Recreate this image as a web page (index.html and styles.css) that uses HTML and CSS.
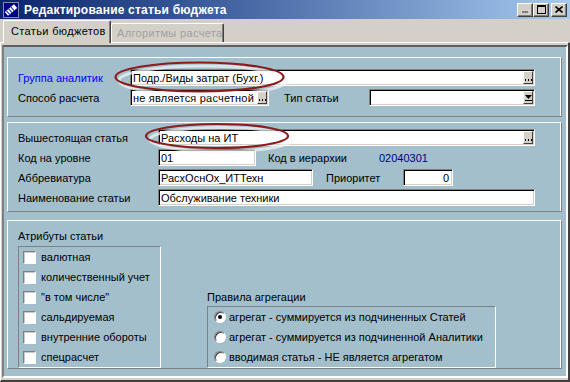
FILE: index.html
```html
<!DOCTYPE html>
<html lang="ru">

<head>
  <meta charset="UTF-8" />
  <title>Редактирование статьи бюджета</title>
  <link rel="stylesheet" href="styles.css">
</head>

<body>
  <div class="window">
    <div class="titlebar">
      <svg class="app-icon" width="16" height="16" viewBox="0 0 16 16">
        <rect x="0.5" y="0.5" width="15" height="15" fill="#000080" stroke="#ffffff" stroke-dasharray="1 1" />
        <g transform="rotate(-40 8 8)">
          <rect x="2" y="5.5" width="12" height="5" fill="#ffffff" />
          <line x1="4" y1="5.5" x2="4" y2="10.5" stroke="#1f3fbf" stroke-width="1.2" />
          <line x1="7" y1="5.5" x2="7" y2="10.5" stroke="#1f3fbf" stroke-width="1.2" />
          <line x1="10" y1="5.5" x2="10" y2="10.5" stroke="#1f3fbf" stroke-width="1.2" />
        </g>
      </svg>
      <span class="title">Редактирование статьи бюджета</span>
      <div class="caption-btns">
        <span class="cbtn">
          <svg width="8" height="7" viewBox="0 0 8 7"><rect x="1" y="5" width="6" height="2" fill="#808080" /></svg>
        </span>
        <span class="cbtn">
          <svg width="9" height="9" viewBox="0 0 9 9"><rect x="0.5" y="0.5" width="8" height="8" fill="none" stroke="#000" /><rect x="0" y="0" width="9" height="2" fill="#000" /></svg>
        </span>
        <span class="cbtn close">
          <svg width="8" height="7" viewBox="0 0 8 7"><path d="M0.5 0.5 L7.5 6.5 M7.5 0.5 L0.5 6.5" stroke="#000" stroke-width="1.6" /></svg>
        </span>
      </div>
    </div>

    <div class="tabs">
      <div class="tab active">Статьи бюджетов</div>
      <div class="tab disabled">Алгоритмы расчета</div>
    </div>

    <div class="page">
      <div class="client">
        <div class="panel p-top">
          <div class="row">
            <span class="lbl lbl-a link">Группа аналитик</span>
            <div class="edit e-analytic"><span class="val">Подр./Виды затрат (Бухг.)</span><span class="ebtn"><svg width="7" height="2" viewBox="0 0 7 2"><rect x="0" y="0" width="1" height="2" /><rect x="3" y="0" width="1" height="2" /><rect x="6" y="0" width="1" height="2" /></svg></span></div>
          </div>
          <div class="row">
            <span class="lbl lbl-a">Способ расчета</span>
            <div class="edit e-method"><span class="val spaced">не является расчетной</span><span class="ebtn"><svg width="7" height="2" viewBox="0 0 7 2"><rect x="0" y="0" width="1" height="2" /><rect x="3" y="0" width="1" height="2" /><rect x="6" y="0" width="1" height="2" /></svg></span></div>
            <span class="lbl lbl-type">Тип статьи</span>
            <div class="edit e-type"><span class="val"></span>
              <span class="ebtn drop">
                <svg width="7" height="8" viewBox="0 0 7 8"><path d="M0 1 H7 L3.5 5 Z" fill="#000" /><rect x="0" y="6" width="7" height="1" fill="#000" /></svg>
              </span>
            </div>
          </div>
        </div>

        <div class="panel p-mid">
          <div class="row">
            <span class="lbl lbl-b">Вышестоящая статья</span>
            <div class="edit e-parent"><span class="val">Расходы на ИТ</span><span class="ebtn"><svg width="7" height="2" viewBox="0 0 7 2"><rect x="0" y="0" width="1" height="2" /><rect x="3" y="0" width="1" height="2" /><rect x="6" y="0" width="1" height="2" /></svg></span></div>
          </div>
          <div class="row">
            <span class="lbl lbl-b">Код на уровне</span>
            <div class="edit e-code"><span class="val">01</span></div>
            <span class="lbl lbl-hier">Код в иерархии</span>
            <span class="code-val">02040301</span>
          </div>
          <div class="row">
            <span class="lbl lbl-b">Аббревиатура</span>
            <div class="edit e-abbr"><span class="val">РасхОснОх_ИТТехн</span></div>
            <span class="lbl lbl-prio">Приоритет</span>
            <div class="edit e-prio"><span class="val num">0</span></div>
          </div>
          <div class="row">
            <span class="lbl lbl-b">Наименование статьи</span>
            <div class="edit e-parent"><span class="val">Обслуживание техники</span></div>
          </div>
        </div>

        <div class="panel p-bottom">
          <div class="col col-attr">
            <div class="cap">Атрибуты статьи</div>
            <div class="group">
              <div class="opt"><span class="check"></span>валютная</div>
              <div class="opt"><span class="check"></span>количественный учет</div>
              <div class="opt"><span class="check"></span>"в том числе"</div>
              <div class="opt"><span class="check"></span>сальдируемая</div>
              <div class="opt"><span class="check"></span>внутренние обороты</div>
              <div class="opt"><span class="check"></span>спецрасчет</div>
            </div>
          </div>
          <div class="col col-rules">
            <div class="cap">Правила агрегации</div>
            <div class="group radios">
              <div class="opt"><span class="radio on"></span>агрегат - суммируется из подчиненных Статей</div>
              <div class="opt"><span class="radio"></span>агрегат - суммируется из подчиненной Аналитики</div>
              <div class="opt"><span class="radio"></span>вводимая статья - НЕ является агрегатом</div>
            </div>
          </div>
        </div>
      </div>
    </div>

    <!-- red marks drawn over the form -->
    <svg class="marks" width="570" height="382" viewBox="0 0 570 382">
      <ellipse cx="201" cy="78.5" rx="84" ry="14.5" fill="none" stroke="#f4f6f6" stroke-opacity=".7" stroke-width="3" transform="translate(2 2)" />
      <ellipse cx="199.5" cy="77" rx="84" ry="14.5" fill="none" stroke="#8c1c1c" stroke-width="2.2" />
      <ellipse cx="219" cy="137.5" rx="71" ry="12" fill="none" stroke="#f4f6f6" stroke-opacity=".7" stroke-width="3" transform="translate(2 2)" />
      <ellipse cx="217" cy="136" rx="71" ry="12" fill="none" stroke="#8c1c1c" stroke-width="2.2" />
    </svg>
  </div>
</body>

</html>
```

FILE: styles.css
```css
* {
  box-sizing: border-box;
  margin: 0;
  padding: 0;
}

body {
  font-family: "Liberation Sans", Arial, sans-serif;
  font-size: 11px;
  color: #000;
  background: #d4d0c8;
}

.window {
  position: relative;
  width: 570px;
  height: 382px;
  overflow: hidden;
  background: #d4d0c8;
}

/* title bar */
.titlebar {
  height: 19px;
  display: flex;
  align-items: center;
  padding: 0 3px 0 3px;
  background: linear-gradient(to right, #0a246a 0%, #3a5a9a 35%, #a6caf0 100%);
}

.app-icon {
  flex: none;
}

.title {
  margin-left: 5px;
  color: #fff;
  font-weight: bold;
  font-size: 12px;
  letter-spacing: .2px;
}

.caption-btns {
  margin-left: auto;
  display: flex;
}

.cbtn {
  width: 16px;
  height: 14px;
  display: flex;
  align-items: center;
  justify-content: center;
  background: #d4d0c8;
  border-top: 1px solid #fff;
  border-left: 1px solid #fff;
  border-right: 1px solid #404040;
  border-bottom: 1px solid #404040;
  box-shadow: inset -1px -1px 0 #808080;
}

.cbtn.close {
  margin-left: 2px;
}

/* tabs */
.tabs {
  height: 23px;
  display: flex;
  align-items: flex-end;
  padding-left: 3px;
  position: relative;
  z-index: 1;
}

.tab {
  padding-left: 7px;
  white-space: nowrap;
  font-size: 11px;
  letter-spacing: .35px;
  border-top: 1px solid #fff;
  border-left: 1px solid #fff;
  border-right: 1px solid #404040;
  box-shadow: inset -1px 0 0 #808080;
  border-radius: 2px 2px 0 0;
  background: #d4d0c8;
}

.tab.active {
  height: 23px;
  line-height: 21px;
  width: 108px;
  margin-bottom: -1px;
}

.tab.disabled {
  height: 19px;
  line-height: 18px;
  padding-left: 5px;
  color: #a0a0a0;
  width: 113px;
}

.page {
  height: 340px;
  border-top: 1px solid #fff;
  border-left: 1px solid #fff;
  border-right: 2px solid #404040;
  border-bottom: 2px solid #404040;
  padding: 2px 0 2px 1px;
}

.client {
  height: 100%;
  background: #a3bfcb;
  border-top: 2px solid #606060;
  border-left: 2px solid #808080;
  border-right: 2px solid #fff;
  border-bottom: 2px solid #fff;
  padding: 10px 4px 0 3px;
}

/* panels */
.panel {
  border-top: 1px solid #fff;
  border-left: 1px solid #fff;
  border-right: 1px solid #808080;
  border-bottom: 1px solid #808080;
  box-shadow: inset -1px 0 0 #fff;
  padding-left: 10px;
}

.p-top {
  padding-top: 11px;
  padding-bottom: 10px;
}

.p-mid {
  margin-top: 5px;
  padding-top: 6px;
  padding-bottom: 5px;
}

.p-bottom {
  margin-top: 8px;
  padding-top: 8px;
  display: flex;
  align-items: flex-end;
}

.row {
  display: flex;
  align-items: center;
  height: 17px;
}

.row + .row {
  margin-top: 3px;
}

.lbl {
  flex: none;
  white-space: nowrap;
}

.lbl-a {
  width: 112px;
}

.lbl-b {
  width: 140px;
}

.link {
  color: #0000ff;
}

.lbl-type {
  width: 85px;
  margin-left: 15px;
}

.lbl-hier {
  width: 111px;
  margin-left: 12px;
}

.lbl-prio {
  width: 77px;
  margin-left: 13px;
}

.code-val {
  color: #000080;
}

/* edits */
.edit {
  flex: none;
  height: 17px;
  display: flex;
  align-items: center;
  background: #fff;
  border-top: 1px solid #808080;
  border-left: 1px solid #808080;
  border-right: 1px solid #fff;
  border-bottom: 1px solid #fff;
  box-shadow: inset 1px 1px 0 #000, inset -1px -1px 0 #d4d0c8;
  padding: 0 1px 0 2px;
}

.val {
  flex: 1;
  white-space: nowrap;
  overflow: hidden;
}

.val.spaced {
  letter-spacing: .2px;
}

.val.num {
  text-align: right;
  padding-right: 2px;
}

.ebtn {
  flex: none;
  width: 10px;
  height: 13px;
  display: flex;
  align-items: flex-end;
  justify-content: center;
  padding-bottom: 2px;
  background: #d4d0c8;
  border-top: 1px solid #fff;
  border-left: 1px solid #fff;
  border-right: 1px solid #404040;
  border-bottom: 1px solid #404040;
}

.ebtn.drop {
  align-items: center;
  padding: 0;
}

.e-analytic {
  width: 405px;
}

.e-method {
  width: 139px;
}

.e-type {
  width: 166px;
}

.e-parent {
  width: 377px;
}

.e-code {
  width: 98px;
}

.e-abbr {
  width: 155px;
}

.e-prio {
  width: 50px;
}

/* attributes and rules */
.col-attr {
  width: 143px;
}

.col-rules {
  margin-left: 46px;
  width: 289px;
}

.cap {
  height: 14px;
  line-height: 14px;
  margin-bottom: 3px;
}

.col-rules .cap {
  margin-bottom: 2px;
}

.group {
  border-top: 1px solid #808080;
  border-left: 1px solid #808080;
  border-right: 1px solid #fff;
  border-bottom: 1px solid #fff;
  padding-left: 4px;
}

.group.radios {
  padding-left: 6px;
}

.opt {
  height: 20px;
  display: flex;
  align-items: center;
  white-space: nowrap;
}

.check {
  width: 13px;
  height: 13px;
  margin-right: 5px;
  background: #fff;
  border-top: 1px solid #808080;
  border-left: 1px solid #808080;
  border-right: 1px solid #fff;
  border-bottom: 1px solid #fff;
  box-shadow: inset 1px 1px 0 #c8c8c8;
}

.radio {
  position: relative;
  width: 12px;
  height: 12px;
  margin-right: 3px;
  border-radius: 50%;
  background: #fff;
  border: 1px solid;
  border-color: #808080 #fff #fff #808080;
  box-shadow: inset 1px 1px 0 #404040;
}

.radio.on::after {
  content: "";
  position: absolute;
  left: 3px;
  top: 3px;
  width: 4px;
  height: 4px;
  border-radius: 50%;
  background: #000;
}

.marks {
  position: absolute;
  top: 0;
  left: 0;
  pointer-events: none;
}
```
